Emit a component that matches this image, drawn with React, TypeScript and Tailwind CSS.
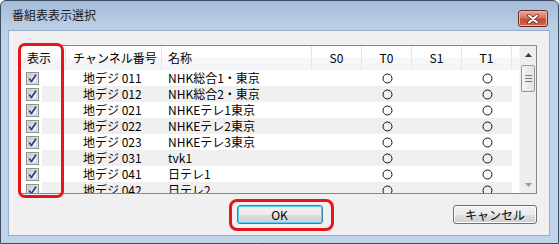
const ROWS = [
  { ch: "地デジ 011", name: "NHK総合1・東京" },
  { ch: "地デジ 012", name: "NHK総合2・東京" },
  { ch: "地デジ 021", name: "NHKEテレ1東京" },
  { ch: "地デジ 022", name: "NHKEテレ2東京" },
  { ch: "地デジ 023", name: "NHKEテレ3東京" },
  { ch: "地デジ 031", name: "tvk1" },
  { ch: "地デジ 041", name: "日テレ1" },
  { ch: "地デジ 042", name: "日テレ2" },
];

function CheckBox() {
  return (
    <svg width="13" height="13" viewBox="0 0 13 13" className="shrink-0">
      <defs>
        <linearGradient id="cbg" x1="0" y1="0" x2="1" y2="1">
          <stop offset="0" stopColor="#cbcfd5" />
          <stop offset="1" stopColor="#f6f6f6" />
        </linearGradient>
      </defs>
      <rect x="0.5" y="0.5" width="12" height="12" fill="#f4f4f4" stroke="#8e8f8f" />
      <rect x="2" y="2" width="9" height="9" fill="url(#cbg)" stroke="#a5a9ae" strokeWidth="0.6" />
      <path d="M3.2 6.6 L5.4 9.6 L10 2.8" fill="none" stroke="#2a3f93" strokeWidth="1.7" strokeLinejoin="round" />
    </svg>
  );
}

function Circle() {
  return (
    <svg width="11" height="11" viewBox="0 0 11 11">
      <circle cx="5.5" cy="5.5" r="4.5" fill="none" stroke="#111" strokeWidth="1" />
    </svg>
  );
}

function Button({ label, primary, w }: { label: string; primary?: boolean; w: string }) {
  return (
    <div
      className={`${w} h-[19px] rounded-[3px] border flex items-center justify-center text-[12px] leading-none text-black bg-[linear-gradient(#f2f2f2_0%,#ebebeb_50%,#dddddd_51%,#cfcfcf_100%)] ${
        primary
          ? "border-[#3c7fb1] shadow-[inset_0_0_0_1px_#5fd0f8]"
          : "border-[#707070] shadow-[inset_0_0_0_1px_#fcfcfc]"
      }`}
    >
      {label}
    </div>
  );
}

export default function App() {
  return (
    <div className="w-[559px] h-[244px] relative overflow-hidden font-['Noto_Sans_CJK_JP',sans-serif]">
      <div className="w-full h-full border border-[#3b4d63] rounded-t-[6px] flex flex-col pl-[7px] pr-[8px] pb-[7px] bg-[linear-gradient(#a4bcd8_0px,#b9cde5_24px,#bfd3ea_40px,#bfd3ea_100%)]">
        {/* title bar */}
        <div className="h-[29px] flex items-start justify-between shrink-0">
          <div className="pt-[7px] pl-[4px] text-[12px] leading-[14px] text-[#1a1a1a]">番組表表示選択</div>
          <div className="mt-[9px] mr-[2px] w-[30px] h-[17px] rounded-[3px] border border-[#6e2a22] flex items-center justify-center bg-[linear-gradient(#e8a899_0%,#d7735f_45%,#c44a32_55%,#d06a4c_100%)] shadow-[inset_0_0_0_1px_#f0b7a8]">
            <svg width="12" height="10" viewBox="0 0 12 10">
              <path d="M2 1.5 L10 8.5 M10 1.5 L2 8.5" stroke="#5b2018" strokeWidth="3.4" strokeLinecap="round" />
              <path d="M2 1.5 L10 8.5 M10 1.5 L2 8.5" stroke="#ffffff" strokeWidth="2" strokeLinecap="round" />
            </svg>
          </div>
        </div>

        {/* client */}
        <div className="flex-1 bg-[#f0f0f0] border border-[#98aecb] flex flex-col pl-[11px] pt-[14px]">
          <div className="w-[517px] h-[149px] border border-[#828790] bg-white flex overflow-hidden text-[12px] text-black">
            <div className="w-[498px] flex flex-col">
              {/* header */}
              <div className="h-[24px] flex shrink-0 bg-[linear-gradient(#ffffff_0%,#ffffff_45%,#f6f7f9_50%,#f3f4f6_100%)]">
                <div className="w-[45px] border-r border-[#e3e6ea] pl-[6px] flex items-center">表示</div>
                <div className="w-[96px] border-r border-[#e3e6ea] pl-[7px] flex items-center">チャンネル番号</div>
                <div className="w-[150px] border-r border-[#e3e6ea] pl-[6px] flex items-center">名称</div>
                {["S0", "T0", "S1", "T1"].map((h) => (
                  <div key={h} className="w-[50px] border-r border-[#e3e6ea] flex items-center justify-center">
                    {h}
                  </div>
                ))}
              </div>
              {/* rows */}
              {ROWS.map((r, i) => (
                <div key={r.ch} className="h-[16px] flex shrink-0 leading-none">
                  <div className="w-[21px] flex items-center pl-[5px] bg-white">
                    <CheckBox />
                  </div>
                  <div className={`w-[470px] flex items-center ${i % 2 ? "bg-[#f0f0f0]" : "bg-white"}`}>
                    <div className="w-[24px]" />
                    <div className="w-[96px] pl-[17px] whitespace-nowrap">{r.ch}</div>
                    <div className="w-[150px] pl-[6px] whitespace-nowrap">{r.name}</div>
                    <div className="w-[50px]" />
                    <div className="w-[50px] flex justify-center">
                      <Circle />
                    </div>
                    <div className="w-[50px]" />
                    <div className="w-[50px] flex justify-center">
                      <Circle />
                    </div>
                  </div>
                </div>
              ))}
            </div>

            {/* scrollbar */}
            <div className="w-[17px] h-full flex flex-col bg-[#eeeeee] border-l border-[#f4f4f4]">
              <div className="h-[17px] flex items-center justify-center shrink-0">
                <svg width="7" height="4" viewBox="0 0 7 4">
                  <path d="M0 4 L3.5 0 L7 4 Z" fill="#3c3c3c" />
                </svg>
              </div>
              <div className="mx-[1px] mt-[2px] h-[27px] rounded-[2px] border border-[#979797] bg-[linear-gradient(90deg,#f3f3f3,#e2e2e2)] flex flex-col items-center justify-center gap-[2px] shrink-0">
                <div className="w-[7px] h-px bg-[#7a7a7a]" />
                <div className="w-[7px] h-px bg-[#7a7a7a]" />
                <div className="w-[7px] h-px bg-[#7a7a7a]" />
              </div>
              <div className="flex-1" />
              <div className="h-[17px] flex items-center justify-center shrink-0">
                <svg width="7" height="4" viewBox="0 0 7 4">
                  <path d="M0 0 L7 0 L3.5 4 Z" fill="#9a9a9a" />
                </svg>
              </div>
            </div>
          </div>

          {/* buttons */}
          <div className="w-[517px] mt-[11px] grid grid-cols-[1fr_auto_1fr] items-center">
            <div />
            <div className="pl-[2px]">
              <Button label="OK" primary w="w-[86px]" />
            </div>
            <div className="justify-self-end">
              <Button label="キャンセル" w="w-[84px]" />
            </div>
          </div>
        </div>
      </div>

      {/* red highlight marks */}
      <div className="absolute left-[18px] top-[43px] w-[46px] h-[155px] border-[3px] border-[#e8141c] rounded-[7px] pointer-events-none" />
      <div className="absolute left-[229px] top-[199px] w-[105px] h-[32px] border-[3px] border-[#e8141c] rounded-[8px] pointer-events-none" />
    </div>
  );
}
